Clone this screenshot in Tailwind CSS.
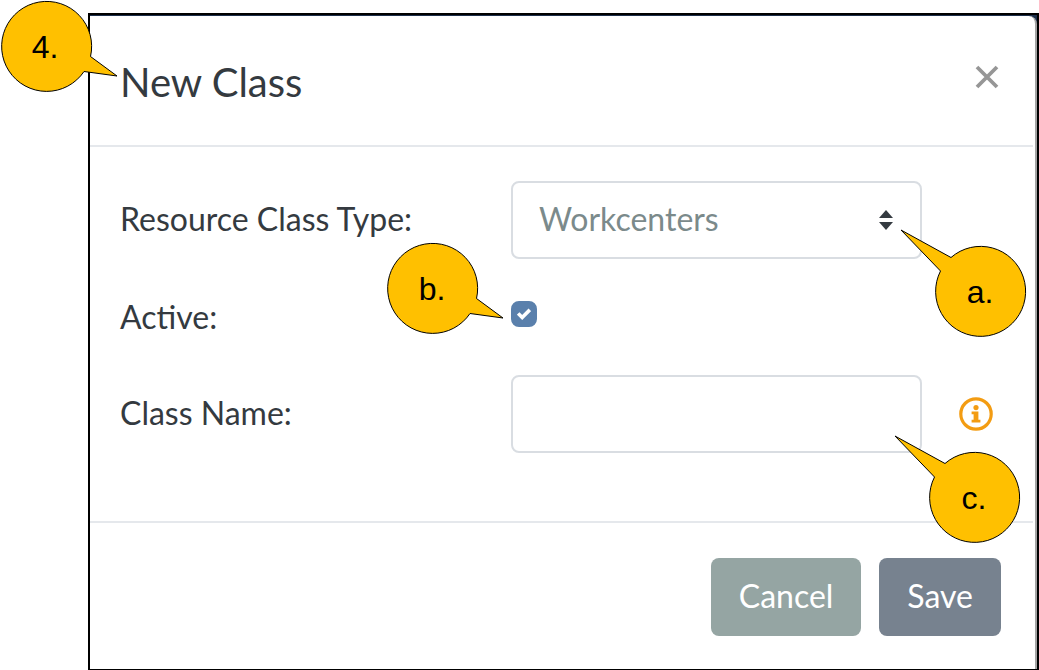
<!DOCTYPE html>
<html lang="en">
<head>
    <meta charset="UTF-8">
    <meta name="viewport" content="width=device-width, initial-scale=1.0">
    <title>New Class</title>
    <script src="https://cdn.jsdelivr.net/npm/@tailwindcss/browser@4"></script>
</head>
<body class="bg-white pt-[13px] pl-[88px] font-['Lato',sans-serif] text-[32px] leading-[42px] text-[#343a40]">
    <!-- Dialog frame -->
    <div class="relative border-2 border-black bg-[#1c2f4b] pt-px">
        <div role="dialog" aria-labelledby="dialogTitle" class="bg-white rounded-tr-lg border-r-2 border-[#a3a3a3] pr-[2px]">
            <header class="flex items-start justify-between pl-[30px] pr-[34px] pt-[42px] pb-[39px] border-b-2 border-[#e5e8ec]">
                <h1 id="dialogTitle" class="text-[40px] leading-[48px]">New Class</h1>
                <button type="button" aria-label="Close" class="mt-[7px] text-[#969696]">
                    <svg class="size-6" viewBox="0 0 24 24" fill="none" stroke="currentColor" stroke-width="3.8">
                        <path d="M2 2 L22 22 M22 2 L2 22" />
                    </svg>
                </button>
            </header>

            <form id="classForm">
                <main class="pl-[30px] pt-[34px] pb-[68px] space-y-[37px] border-b-2 border-[#e5e8ec]">
                    <!-- Resource Class Type -->
                    <div class="grid grid-cols-[391fr_411fr_111fr] items-center">
                        <label for="resourceClassType" class="pb-[3px]">Resource Class Type:</label>
                        <div class="relative">
                            <select id="resourceClassType" class="block w-full h-[78px] pl-[26px] pr-12 pb-[3px] border-2 border-[#d9dde2] rounded-lg appearance-none bg-white text-[#7b8a8b]">
                                <option>Workcenters</option>
                            </select>
                            <svg class="absolute right-[29px] top-[29px] w-[14px] h-5 pointer-events-none" viewBox="0 0 14 20" fill="#343a40">
                                <path d="M7 0 L14 8 H0 Z M0 12 H14 L7 20 Z" />
                            </svg>
                            <!-- Callout a -->
                            <svg class="absolute -right-[106px] top-[48px] w-[128px] h-[109px] z-10" viewBox="0 0 128 109">
                                <path d="M51 28.5 L1 1 L40.5 42 A45 45 0 1 0 51 28.5 Z" fill="#ffc000" stroke="#000" />
                                <text x="80" y="74" text-anchor="middle" class="font-['Liberation_Sans',sans-serif] text-[32px]">a.</text>
                            </svg>
                        </div>
                    </div>
                    <!-- Active -->
                    <div class="grid grid-cols-[391fr_411fr_111fr] items-start">
                        <label for="active">Active:</label>
                        <div class="relative pt-[5px]">
                            <input id="active" type="checkbox" checked class="peer block size-[26px] appearance-none rounded-lg bg-white border-2 border-[#adb5bd] checked:bg-[#5a80ac] checked:border-[#5a80ac]">
                            <svg class="absolute left-[6px] top-[12px] w-[14px] h-3 pointer-events-none hidden peer-checked:block" viewBox="0 0 14 12" fill="none" stroke="#fff" stroke-width="3.6">
                                <path d="M1.2 5.4 L5.2 9.4 L12.8 1.8" />
                            </svg>
                            <!-- Callout b -->
                            <svg class="absolute -left-[125px] -top-[54px] w-[120px] h-[94px] z-10" viewBox="0 0 120 94">
                                <path d="M90.5 56.5 L117 76 L84 71.5 A45 45 0 1 1 90.5 56.5 Z" fill="#ffc000" stroke="#000" />
                                <text x="46" y="58" text-anchor="middle" class="font-['Liberation_Sans',sans-serif] text-[32px]">b.</text>
                            </svg>
                        </div>
                    </div>
                    <!-- Class Name -->
                    <div class="grid grid-cols-[391fr_411fr_111fr] items-center">
                        <label for="className" class="pb-[3px]">Class Name:</label>
                        <div class="relative">
                            <input id="className" type="text" class="block w-full h-[78px] px-[26px] border-2 border-[#d9dde2] rounded-lg">
                            <!-- Callout c -->
                            <svg class="absolute -right-[100px] top-[60px] w-[128px] h-[109px] z-10" viewBox="0 0 128 109">
                                <path d="M51 28.5 L1 1 L40.5 42 A45 45 0 1 0 51 28.5 Z" fill="#ffc000" stroke="#000" />
                                <text x="80" y="74" text-anchor="middle" class="font-['Liberation_Sans',sans-serif] text-[32px]">c.</text>
                            </svg>
                        </div>
                        <svg class="ml-[37px] size-[34px]" viewBox="0 0 34 34" fill="#f39c12">
                            <circle cx="17" cy="17" r="15.2" fill="none" stroke="#f39c12" stroke-width="3.2" />
                            <circle cx="17" cy="10.6" r="2.6" />
                            <path d="M12.6 14.4 H19.4 V22.8 H21.4 V25.6 H12.6 V22.8 H14.6 V17.2 H12.6 Z" />
                        </svg>
                    </div>
                </main>

                <footer class="flex justify-end gap-[18px] pt-[35px] pb-[33px] pr-[32px] text-white">
                    <button type="button" class="h-[78px] px-7 pb-[3px] rounded-lg bg-[#95a5a3]">Cancel</button>
                    <button type="submit" class="h-[78px] px-7 pb-[3px] rounded-lg bg-[#77828f]">Save</button>
                </footer>
            </form>
        </div>

        <!-- Callout 4 -->
        <svg class="absolute -left-[90px] -top-[15px] w-[120px] h-[94px] z-10" viewBox="0 0 120 94">
            <path d="M90.5 56.5 L117 76 L84 71.5 A45 45 0 1 1 90.5 56.5 Z" fill="#ffc000" stroke="#000" />
            <text x="45" y="58" text-anchor="middle" class="font-['Liberation_Sans',sans-serif] text-[32px]">4.</text>
        </svg>
    </div>

    <script>
        document.getElementById('classForm').addEventListener('submit', (event) => {
            event.preventDefault();
        });
    </script>
</body>
</html>
